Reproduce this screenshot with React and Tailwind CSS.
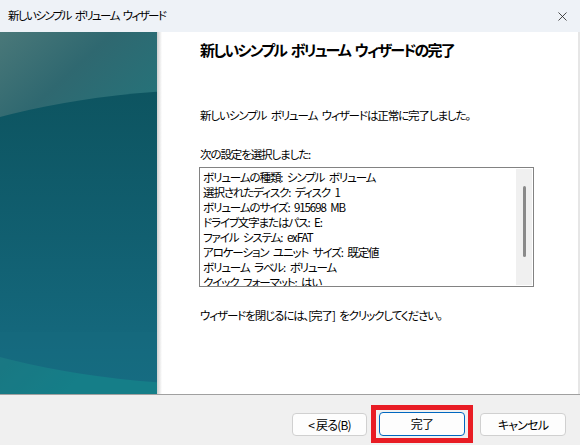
import React from 'react';
import { X } from 'lucide-react';

const jp = "font-['Noto_Sans_CJK_JP','Noto_Sans',sans-serif] [font-feature-settings:'palt'] [word-spacing:3px]";

const settings = [
  'ボリュームの種類: シンプル ボリューム',
  '選択されたディスク: ディスク 1',
  'ボリュームのサイズ: 915698 MB',
  'ドライブ文字またはパス: E:',
  'ファイル システム: exFAT',
  'アロケーション ユニット サイズ: 既定値',
  'ボリューム ラベル: ボリューム',
  'クイック フォーマット: はい',
];

function SidePanel() {
  return (
    <svg width="157" height="362" viewBox="0 0 157 362" className="block">
      <defs>
        <linearGradient id="base" x1="0" y1="0" x2="0.4" y2="1">
          <stop offset="0" stopColor="#4a7879" />
          <stop offset="0.25" stopColor="#2f6870" />
          <stop offset="1" stopColor="#14878c" />
        </linearGradient>
        <linearGradient id="orb" x1="0" y1="0" x2="0" y2="1">
          <stop offset="0" stopColor="#0d5460" />
          <stop offset="0.5" stopColor="#115f70" />
          <stop offset="1" stopColor="#166c82" />
        </linearGradient>
      </defs>
      <rect width="157" height="362" fill="url(#base)" />
      <ellipse cx="235" cy="205" rx="402" ry="148" fill="url(#orb)" />
      <rect y="300" width="157" height="62" fill="#166c82" opacity="0.35" />
    </svg>
  );
}

export default function App() {
  return (
    <div className={`w-[580px] h-[445px] flex flex-col overflow-hidden bg-white text-black ${jp}`}>
      {/* Title bar */}
      <div className="h-[32px] flex items-center justify-between pl-[8px] pr-[10px] bg-[#eef2f7]">
        <span className="text-[11.5px] tracking-[-1.6px]">新しいシンプル ボリューム ウィザード</span>
        <X className="w-[15px] h-[15px] text-[#222]" strokeWidth={1.3} />
      </div>

      {/* Body */}
      <div className="h-[362px] flex border-r-2 border-[#e6e6e6]">
        <SidePanel />
        <div className="w-[5px] bg-gradient-to-r from-[#cfcfcf] to-white" />
        <div className="flex-1 pl-[38px] pt-[8px] text-[11.5px] tracking-[-1.1px]">
          <h1 className="text-[15px] font-bold leading-[20px] tracking-[-1.8px]">新しいシンプル ボリューム ウィザードの完了</h1>
          <p className="mt-[47px] leading-[16px]">新しいシンプル ボリューム ウィザードは正常に完了しました。</p>
          <p className="mt-[23px] leading-[16px]">次の設定を選択しました:</p>
          <div className="mt-[5px] -ml-[1px] w-[335px] h-[120px] border border-[#828282] flex overflow-hidden">
            <div className="flex-1 pl-[3px] pt-[2px] leading-[15px] whitespace-nowrap">
              {settings.map((s) => (
                <div key={s}>{s}</div>
              ))}
            </div>
            <div className="w-[16px] my-[1px] mr-[1px] bg-[#f0f0f0] flex justify-center pt-[17px]">
              <div className="w-[3px] h-[71px] rounded-full bg-[#8a8a8a]" />
            </div>
          </div>
          <p className="mt-[20px] leading-[16px]">ウィザードを閉じるには、[完了] をクリックしてください。</p>
        </div>
      </div>

      {/* Footer */}
      <div className="flex-1 border-t border-[#a0a0a0] bg-[#f0f0f0] flex items-start justify-end pt-[17px] pr-[14px] text-[12px] tracking-[-0.8px]">
        <button className="mt-[1px] w-[75px] h-[23px] rounded-[4px] border border-[#d0d0d0] bg-[#fdfdfd]">
          &lt; 戻る(B)
        </button>
        <div className="relative ml-[12px]">
          <button className="w-[86px] h-[24px] rounded-[4px] border border-[#0067c0] bg-[#fdfdfd]">完了</button>
          <div className="absolute -left-[8px] -right-[8px] -top-[7px] -bottom-[7px] border-[5px] border-[#e81c24] pointer-events-none" />
        </div>
        <button className="ml-[15px] mt-[1px] w-[86px] h-[23px] rounded-[4px] border border-[#d0d0d0] bg-[#fdfdfd]">
          キャンセル
        </button>
      </div>
    </div>
  );
}
